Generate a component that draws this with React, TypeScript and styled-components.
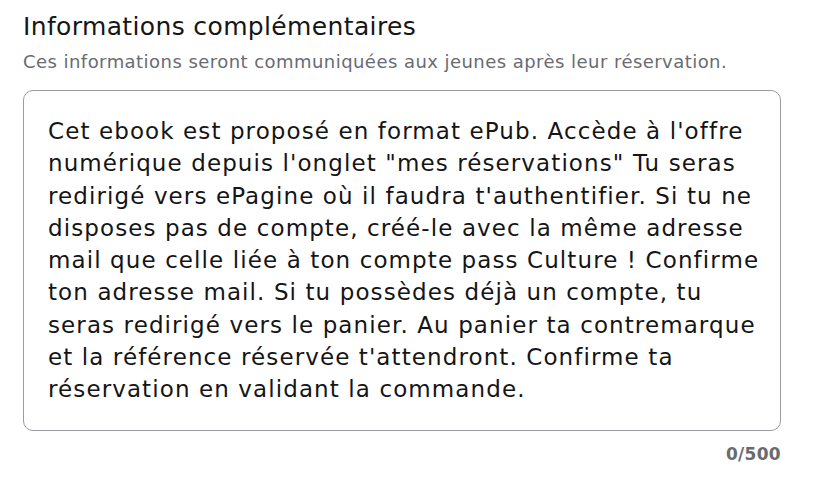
import React from 'react';
import styled, {createGlobalStyle} from 'styled-components';

const GlobalStyle = createGlobalStyle`
    body {
        margin: 0;
        background: #ffffff;
        font-family: "DejaVu Sans", "Noto Sans", sans-serif;
    }
`;

const Page = styled.div`
    padding: 12px 0 0 23px;
    width: 758px;
`;

const Title = styled.h2`
    margin: 0;
    font-size: 25px;
    line-height: 30px;
    font-weight: 400;
    letter-spacing: 0.36px;
    color: #161617;
    white-space: nowrap;
`;

const Description = styled.p`
    margin: 8px 0 0;
    font-size: 18px;
    line-height: 24px;
    letter-spacing: 0.45px;
    color: #696b73;
    white-space: nowrap;
`;

const TextBox = styled.div`
    box-sizing: border-box;
    margin-top: 16px;
    height: 341px;
    padding: 24px 24px;
    border: 1px solid #9a9ca4;
    border-radius: 10px;
    background: #ffffff;
`;

const Line = styled.div`
    font-size: 23px;
    line-height: 32.25px;
    letter-spacing: 1.1px;
    color: #151515;
    white-space: nowrap;
`;

const Counter = styled.div`
    margin-top: 13px;
    text-align: right;
    font-size: 17px;
    line-height: 20px;
    font-weight: 700;
    letter-spacing: 0.3px;
    color: #6a6b70;
`;

const lines = [
    "Cet ebook est proposé en format ePub. Accède à l'offre",
    'numérique depuis l\'onglet "mes réservations" Tu seras',
    "redirigé vers ePagine où il faudra t'authentifier. Si tu ne",
    'disposes pas de compte, créé-le avec la même adresse',
    'mail que celle liée à ton compte pass Culture ! Confirme',
    'ton adresse mail. Si tu possèdes déjà un compte, tu',
    'seras redirigé vers le panier. Au panier ta contremarque',
    "et la référence réservée t'attendront. Confirme ta",
    'réservation en validant la commande.',
];

export default function App() {
    return (
        <>
            <GlobalStyle/>
            <Page>
                <Title>Informations complémentaires</Title>
                <Description>Ces informations seront communiquées aux jeunes après leur réservation.</Description>
                <TextBox>
                    {lines.map((line) => (
                        <Line key={line}>{line}</Line>
                    ))}
                </TextBox>
                <Counter>0/500</Counter>
            </Page>
        </>
    );
}
